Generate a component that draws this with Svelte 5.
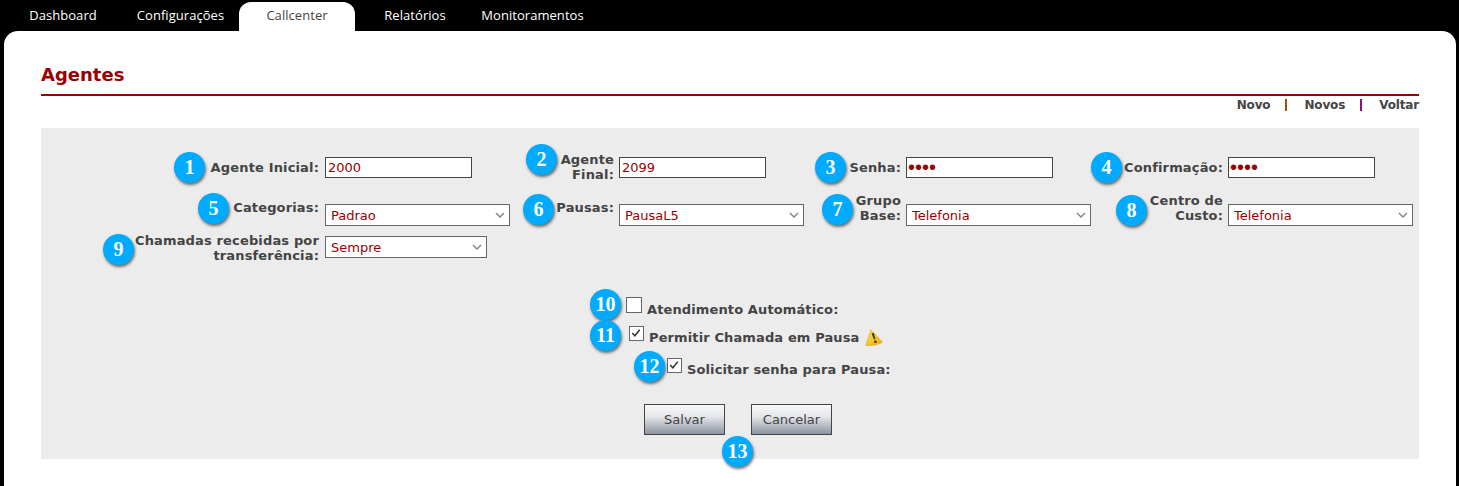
<script>
  const tabs = [
    { label: 'Dashboard', w: 118 },
    { label: 'Configurações', w: 117 },
    { label: 'Callcenter', w: 116, active: true },
    { label: 'Relatórios', w: 120 },
    { label: 'Monitoramentos', w: 115 }
  ];
  const badges = [
    { n: 1, x: 174, y: 152 }, { n: 2, x: 526, y: 144 }, { n: 3, x: 815, y: 152 }, { n: 4, x: 1091, y: 152 },
    { n: 5, x: 198, y: 193 }, { n: 6, x: 523, y: 194 }, { n: 7, x: 822, y: 194 }, { n: 8, x: 1116, y: 195 },
    { n: 9, x: 103, y: 234 }, { n: 10, x: 590, y: 289 }, { n: 11, x: 590, y: 320 }, { n: 12, x: 634, y: 351 },
    { n: 13, x: 722, y: 436 }
  ];
</script>

<div class="page">
  <nav class="tabs">
    {#each tabs as t}
      <a class="tab" class:active={t.active} style="width:{t.w}px">{t.label}</a>
    {/each}
  </nav>
  <main class="card">
    <h1>Agentes</h1>
    <div class="links">
      <a>Novo</a><span class="sep s1"></span><a>Novos</a><span class="sep s2"></span><a>Voltar</a>
    </div>
    <section class="panel">
      <div class="grid">
        <div class="cell r1 first"><label>Agente Inicial:</label></div>
        <div class="ctl r1"><input class="txt" value="2000" /></div>
        <div class="cell r1"><label>Agente<br />Final:</label></div>
        <div class="ctl r1"><input class="txt" value="2099" /></div>
        <div class="cell r1"><label>Senha:</label></div>
        <div class="ctl r1"><input class="txt pw" type="password" value="1234" /></div>
        <div class="cell r1"><label>Confirmação:</label></div>
        <div class="ctl r1"><input class="txt pw" type="password" value="1234" /></div>

        <div class="cell r2 first top"><label>Categorias:</label></div>
        <div class="ctl r2"><select><option>Padrao</option></select></div>
        <div class="cell r2 top"><label>Pausas:</label></div>
        <div class="ctl r2"><select><option>PausaL5</option></select></div>
        <div class="cell r2"><label>Grupo<br />Base:</label></div>
        <div class="ctl r2"><select><option>Telefonia</option></select></div>
        <div class="cell r2"><label>Centro de<br />Custo:</label></div>
        <div class="ctl r2"><select><option>Telefonia</option></select></div>

        <div class="cell r3 first"><label>Chamadas recebidas por<br />transferência:</label></div>
        <div class="ctl r3"><select class="short"><option>Sempre</option></select></div>
      </div>

      <div class="checks">
        <div class="check c1"><span class="box big"></span><b>Atendimento Automático:</b></div>
        <div class="check c2">
          <span class="box"><svg viewBox="0 0 13 13"><path d="M2.5 6.5 5.2 9.5 10.5 3" /></svg></span>
          <b>Permitir Chamada em Pausa</b>
          <svg class="warn" viewBox="0 0 18 18">
            <defs>
              <linearGradient id="wg" x1="0" y1="0" x2="1" y2="1">
                <stop offset="0" stop-color="#ffe85c" /><stop offset="1" stop-color="#e9a800" />
              </linearGradient>
            </defs>
            <path d="M6 0.8 17.5 13.2 Q9 17.8 0.8 16.2 Z" fill="url(#wg)" stroke="#e0b020" stroke-width="0.7" stroke-linejoin="round" />
            <path d="M6.6 4.6 8.8 4 10.4 10 9 10.4Z" fill="#3a3320" /><circle cx="10.4" cy="12.8" r="1.3" fill="#3a3320" />
          </svg>
        </div>
        <div class="check c3">
          <span class="box"><svg viewBox="0 0 13 13"><path d="M2.5 6.5 5.2 9.5 10.5 3" /></svg></span>
          <b>Solicitar senha para Pausa:</b>
        </div>
      </div>

      <div class="actions">
        <button>Salvar</button>
        <button>Cancelar</button>
      </div>

      {#each badges as b}
        <span class="badge" style="left:{b.x - 41}px;top:{b.y - 128}px">{b.n}</span>
      {/each}
    </section>
  </main>
</div>

<style>
  :global(body) { margin: 0; background: #000; }
  .page { width: 1459px; height: 486px; background: #000; overflow: hidden; font-family: "DejaVu Sans", Verdana, sans-serif; }

  .tabs { display: flex; height: 31px; padding-left: 4px; box-sizing: border-box; }
  .tab {
    height: 29px; margin-top: 2px; text-align: center; color: #fff; letter-spacing: 0.05px;
    font: 13px/26px "Open Sans", Tahoma, sans-serif; border-radius: 12px 12px 0 0;
  }
  .tab.active { background: #fff; color: #444; }

  .card {
    margin-left: 4px; width: 1452px; height: 455px; box-sizing: border-box; background: #fff;
    border-radius: 14px 14px 0 0; padding: 31px 0 0 37px;
  }
  h1 {
    margin: 0; height: 34px; width: 1378px; box-sizing: border-box; font-size: 18px; line-height: 26px;
    font-weight: 700; color: #990000; border-bottom: 2px solid #990000;
  }
  .links {
    display: flex; justify-content: flex-end; align-items: flex-start; width: 1378px; height: 32px; font-size: 12px;
    font-weight: 700; line-height: 18px; color: #444; letter-spacing: -0.15px;
  }
  .sep { width: 2px; height: 12px; margin: 3px 17px 0 15px; }
  .s1 { background: #b04a00; }
  .s2 { background: #90108a; }

  .panel { position: relative; width: 1378px; height: 331px; background: #ececec; }

  .grid {
    display: grid;
    grid-template-columns: 279px 234px 60px 227px 60px 232px 90px 196px;
    grid-template-rows: 40px 41px 30px;
    padding-top: 24px;
  }
  .cell, .ctl { display: flex; }
  .cell { justify-content: flex-end; font-size: 13px; font-weight: 700; color: #444; line-height: 15px; text-align: right; white-space: nowrap; letter-spacing: 0.15px; }
  .cell.first { padding-right: 1px; }
  .cell.r1 { height: 30px; align-items: center; }
  .cell.r2 { height: 31px; align-items: flex-end; }
  .cell.r2.top { height: auto; align-items: flex-start; padding-top: 8px; }
  .cell.r3 { height: 30px; align-items: center; }
  .ctl { padding-left: 5px; align-items: flex-start; }
  .ctl.r1 { padding-top: 5px; }
  .ctl.r2 { padding-top: 12px; }
  .ctl.r3 { padding-top: 3px; }

  .txt {
    width: 147px; height: 21px; box-sizing: border-box; margin: 0; padding: 0 2px; border: 1px solid #444;
    border-radius: 0; background: #fff; color: #990000; font: 13px "DejaVu Sans", Verdana, sans-serif; outline: none;
  }
  .txt.pw { font: 20px "Liberation Sans", sans-serif; padding: 0 1px; }
  select {
    appearance: none; width: 185px; height: 22px; box-sizing: border-box; margin: 0; padding: 0 16px 0 5px;
    border: 1px solid #666; border-radius: 0; color: #990000; font: 13px "DejaVu Sans", Verdana, sans-serif;
    background: #fff url("data:image/svg+xml,%3Csvg xmlns='http://www.w3.org/2000/svg' width='10' height='6'%3E%3Cpath d='M1 1l4 4 4-4' fill='none' stroke='%23808080' stroke-width='1.4'/%3E%3C/svg%3E") no-repeat right 4px center;
  }
  select.short { width: 162px; }

  .checks { margin-top: 34px; }
  .check { display: flex; align-items: flex-start; font-size: 13px; color: #444; line-height: 16px; letter-spacing: 0.12px; }
  .check b { margin: 5px 0 0 5px; }
  .c1 { height: 28px; margin-left: 585px; }
  .c2 { height: 32px; margin-left: 588px; }
  .c3 { height: 47px; margin-left: 626px; }
  .box {
    width: 15px; height: 15px; box-sizing: border-box; margin-top: 1px; background: #fff; border: 1.5px solid #666;
    display: block; flex: none;
  }
  .box.big { width: 16px; height: 16px; margin-top: 0; }
  .box svg { display: block; width: 12px; height: 12px; }
  .box path { fill: none; stroke: #333; stroke-width: 1.6; }
  .warn { width: 18px; height: 18px; margin: 4px 0 0 6px; flex: none; }

  .actions { display: flex; gap: 26px; margin-left: 603px; }
  button {
    width: 81px; height: 31px; box-sizing: border-box; padding: 0; border: 1px solid #444; border-radius: 0; color: #444;
    font: 13px "DejaVu Sans", Verdana, sans-serif; background: linear-gradient(#f8f8f9, #e4e6e9 40%, #8d94a0);
  }

  .badge {
    position: absolute; width: 31px; height: 31px; border-radius: 50%; background: #00aaff; color: #fff;
    font: 700 20px/31px "Liberation Serif", serif; text-align: center; box-shadow: 1px 2px 3px rgba(0, 0, 0, 0.55);
  }
</style>
